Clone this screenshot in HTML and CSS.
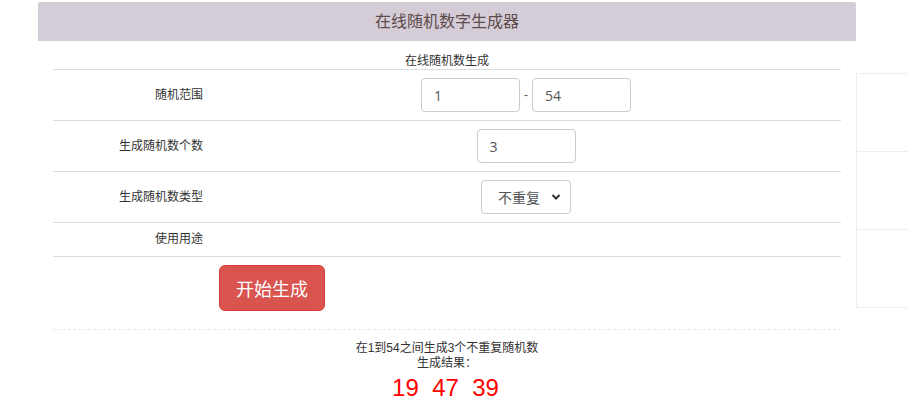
FILE: index.html
```html
<!DOCTYPE html>
<html lang="zh-CN">
<head>
  <meta charset="UTF-8" />
  <meta name="viewport" content="width=device-width, initial-scale=1.0"/>
  <title>在线随机数字生成器</title>
  <link rel="stylesheet" href="styles.css">
</head>
<body>

<div class="page">
  <div class="main">
    <h1 class="title">在线随机数字生成器</h1>

    <div class="panel">
      <table class="gen-table">
        <caption>在线随机数生成</caption>
        <tr>
          <td class="label">随机范围</td>
          <td class="value">
            <input type="text" class="field" value="1">
            <span class="dash">-</span>
            <input type="text" class="field" value="54">
          </td>
        </tr>
        <tr>
          <td class="label">生成随机数个数</td>
          <td class="value"><input type="text" class="field" value="3"></td>
        </tr>
        <tr>
          <td class="label">生成随机数类型</td>
          <td class="value">
            <span class="select-wrap">
              <select class="field select">
                <option>不重复</option>
                <option>可重复</option>
              </select>
              <svg class="chevron" width="10" height="8" viewBox="0 0 10 8"><path d="M1.5 2 L5 5.5 L8.5 2" fill="none" stroke="#333" stroke-width="2"/></svg>
            </span>
          </td>
        </tr>
        <tr>
          <td class="label">使用用途</td>
          <td class="value"></td>
        </tr>
        <tr>
          <td class="label"></td>
          <td class="value left"><button class="btn-go">开始生成</button></td>
        </tr>
      </table>

      <div class="result">
        <p>在1到54之间生成3个不重复随机数</p>
        <p>生成结果：</p>
        <div class="numbers">19&nbsp;&nbsp;47&nbsp;&nbsp;39</div>
      </div>
    </div>
  </div>

  <aside class="side">
    <div class="side-cell"></div>
    <div class="side-cell"></div>
    <div class="side-cell"></div>
  </aside>
</div>

</body>
</html>
```

FILE: styles.css
```css
html, body { margin: 0; padding: 0; overflow: hidden; }
body { font-family: "Liberation Sans", "Noto Sans CJK SC", sans-serif; font-size: 12px; color: #333; background: #fff; }
.page { display: flex; align-items: flex-start; padding-top: 2px; margin-left: 38px; }
.main { width: 818px; flex-shrink: 0; }
.title { margin: 0; height: 39px; line-height: 39px; background: #d4ccd6; color: #5e4b4b; font-size: 16px; font-weight: normal; text-align: center; border-radius: 2px 2px 0 0; }
.panel { padding: 0 15px; }
.gen-table { width: 100%; border-collapse: collapse; }
.gen-table caption { padding-top: 12px; line-height: 16px; color: #333; text-align: center; }
.gen-table td { border-top: 1px solid #ddd; padding: 8px; line-height: 17px; vertical-align: middle; }
.label { width: 142px; text-align: right; }
.value { text-align: center; font-size: 0; }
.value.left { text-align: left; }
.field { box-sizing: border-box; height: 34px; width: 99px; padding: 6px 12px; font-family: "Open Sans", "Noto Sans CJK SC", sans-serif; font-size: 14px; color: #555; border: 1px solid #ccc; border-radius: 4px; background: #fff; vertical-align: middle; }
.dash { display: inline-block; width: 12px; font-size: 12px; color: #555; vertical-align: middle; }
.select-wrap { position: relative; display: inline-block; vertical-align: middle; }
.select { width: 90px; padding: 0 0 0 16px; appearance: none; -webkit-appearance: none; font-family: "Noto Sans CJK SC", sans-serif; }
.chevron { position: absolute; right: 10px; top: 13px; pointer-events: none; }
.btn-go { height: 46px; width: 106px; padding: 0; background: #d9534f; border: 1px solid #d43f3a; border-radius: 6px; color: #fff; font-family: "Noto Sans CJK SC", sans-serif; font-size: 18px; cursor: pointer; }
.result { margin-top: 10px; border-top: 1px dashed #e8e8e8; padding-top: 11px; text-align: center; }
.result p { margin: 0; line-height: 15px; color: #333; }
.numbers { margin-top: 3px; margin-right: 3px; font-family: "Liberation Sans", sans-serif; font-size: 24px; line-height: 28px; color: #f00; }
.side { margin-top: 71px; width: 52px; border: 1px solid #eee; border-right: none; box-sizing: border-box; }
.side-cell { height: 77px; border-top: 1px solid #eee; }
.side-cell:first-child { border-top: none; }
```
